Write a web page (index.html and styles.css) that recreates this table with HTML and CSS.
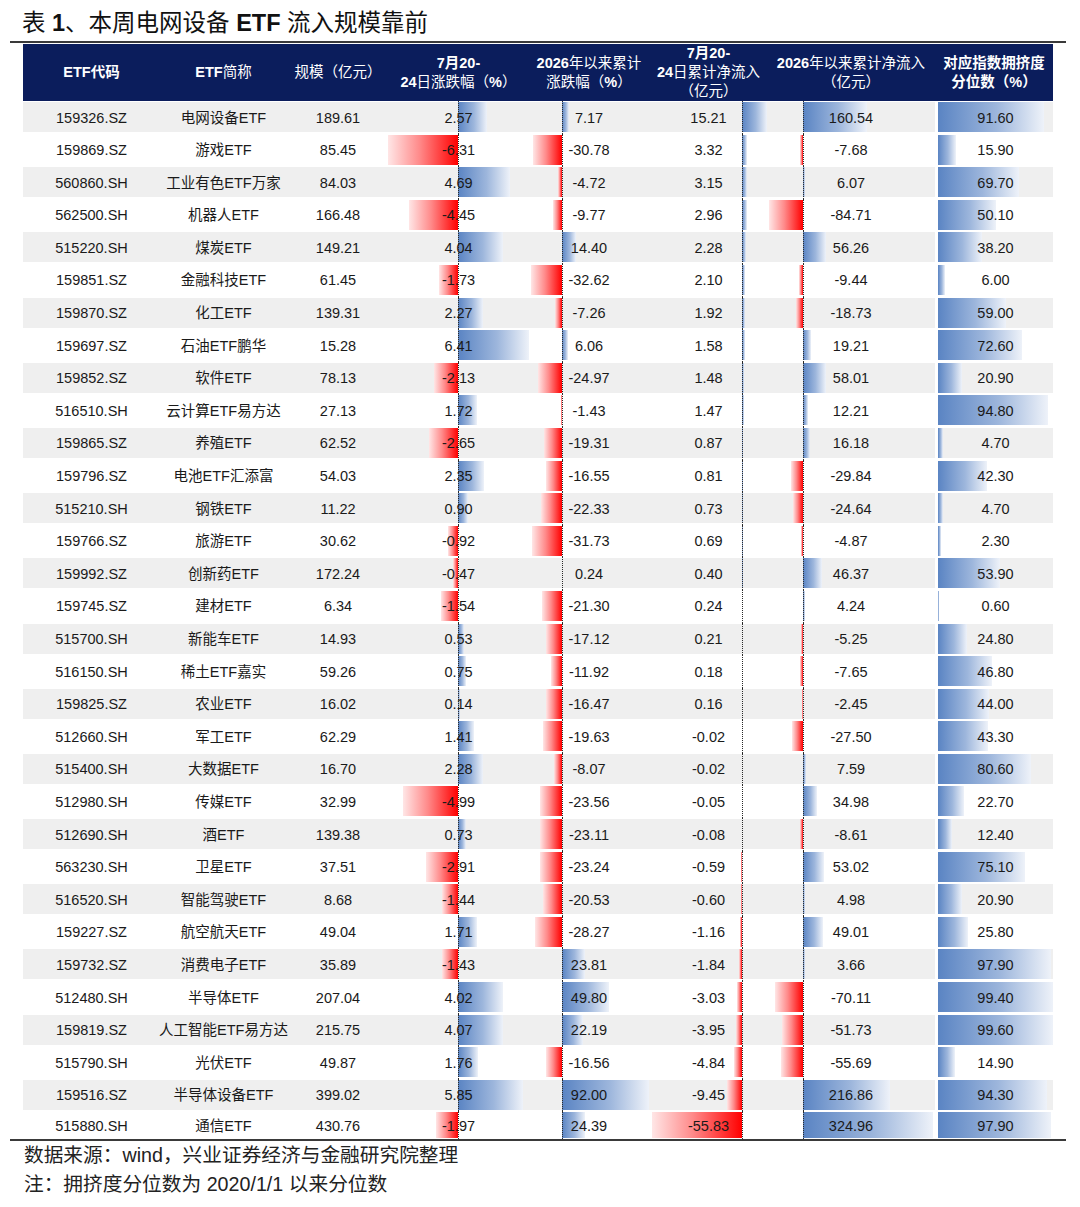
FILE: index.html
```html
<!DOCTYPE html>
<html lang="zh-CN">
<head>
<meta charset="utf-8">
<title>表 1、本周电网设备 ETF 流入规模靠前</title>
<link rel="stylesheet" href="styles.css">
</head>
<body>
<div class="page">
  <h1 class="title">表 <b>1</b>、本周电网设备 <b>ETF</b> 流入规模靠前</h1>
  <div class="rule"></div>
  <div class="table">
    <div class="head">
      <div class="h"><b>ETF代码</b></div>
      <div class="h"><span><b>ETF</b>简称</span></div>
      <div class="h">规模（亿元）</div>
      <div class="h"><span><b>7月20-</b><br><b>24</b>日涨跌幅（<b>%</b>）</span></div>
      <div class="h"><span><b>2026</b>年以来累计<br>涨跌幅（<b>%</b>）</span></div>
      <div class="h"><span><b>7月20-</b><br><b>24</b>日累计净流入<br>（亿元）</span></div>
      <div class="h"><span><b>2026</b>年以来累计净流入<br>（亿元）</span></div>
      <div class="h"><b>对应指数拥挤度<br>分位数（%）</b></div>
    </div>

    <div class="row g"><div class="c"><span>159326.SZ</span></div><div class="c"><span>电网设备ETF</span></div><div class="c"><span>189.61</span></div><div class="c c4"><i class="bp" style="width:28.5px"></i><span>2.57</span></div><div class="c c5"><i class="bp" style="width:6.8px"></i><span>7.17</span></div><div class="c c6"><i class="bp" style="width:24.6px"></i><span>15.21</span></div><div class="c c7"><i class="bp" style="width:64.2px"></i><span>160.54</span></div><div class="c c8"><i class="bp" style="width:105.8px"></i><span>91.60</span></div></div>
    <div class="row"><div class="c"><span>159869.SZ</span></div><div class="c"><span>游戏ETF</span></div><div class="c"><span>85.45</span></div><div class="c c4"><i class="bn" style="width:70px"></i><span>-6.31</span></div><div class="c c5"><i class="bn" style="width:29.2px"></i><span>-30.78</span></div><div class="c c6"><i class="bp" style="width:5.4px"></i><span>3.32</span></div><div class="c c7"><i class="bn" style="width:3.1px"></i><span>-7.68</span></div><div class="c c8"><i class="bp" style="width:18.4px"></i><span>15.90</span></div></div>
    <div class="row g"><div class="c"><span>560860.SH</span></div><div class="c"><span>工业有色ETF万家</span></div><div class="c"><span>84.03</span></div><div class="c c4"><i class="bp" style="width:52.1px"></i><span>4.69</span></div><div class="c c5"><i class="bn" style="width:4.5px"></i><span>-4.72</span></div><div class="c c6"><i class="bp" style="width:5.1px"></i><span>3.15</span></div><div class="c c7"><i class="bp" style="width:2.4px"></i><span>6.07</span></div><div class="c c8"><i class="bp" style="width:80.5px"></i><span>69.70</span></div></div>
    <div class="row"><div class="c"><span>562500.SH</span></div><div class="c"><span>机器人ETF</span></div><div class="c"><span>166.48</span></div><div class="c c4"><i class="bn" style="width:49.4px"></i><span>-4.45</span></div><div class="c c5"><i class="bn" style="width:9.3px"></i><span>-9.77</span></div><div class="c c6"><i class="bp" style="width:4.8px"></i><span>2.96</span></div><div class="c c7"><i class="bn" style="width:33.9px"></i><span>-84.71</span></div><div class="c c8"><i class="bp" style="width:57.9px"></i><span>50.10</span></div></div>
    <div class="row g"><div class="c"><span>515220.SH</span></div><div class="c"><span>煤炭ETF</span></div><div class="c"><span>149.21</span></div><div class="c c4"><i class="bp" style="width:44.8px"></i><span>4.04</span></div><div class="c c5"><i class="bp" style="width:13.7px"></i><span>14.40</span></div><div class="c c6"><i class="bp" style="width:3.7px"></i><span>2.28</span></div><div class="c c7"><i class="bp" style="width:22.5px"></i><span>56.26</span></div><div class="c c8"><i class="bp" style="width:44.1px"></i><span>38.20</span></div></div>
    <div class="row"><div class="c"><span>159851.SZ</span></div><div class="c"><span>金融科技ETF</span></div><div class="c"><span>61.45</span></div><div class="c c4"><i class="bn" style="width:19.2px"></i><span>-1.73</span></div><div class="c c5"><i class="bn" style="width:31px"></i><span>-32.62</span></div><div class="c c6"><i class="bp" style="width:3.4px"></i><span>2.10</span></div><div class="c c7"><i class="bn" style="width:3.8px"></i><span>-9.44</span></div><div class="c c8"><i class="bp" style="width:6.9px"></i><span>6.00</span></div></div>
    <div class="row g"><div class="c"><span>159870.SZ</span></div><div class="c"><span>化工ETF</span></div><div class="c"><span>139.31</span></div><div class="c c4"><i class="bp" style="width:25.2px"></i><span>2.27</span></div><div class="c c5"><i class="bn" style="width:6.9px"></i><span>-7.26</span></div><div class="c c6"><i class="bp" style="width:3.1px"></i><span>1.92</span></div><div class="c c7"><i class="bn" style="width:7.5px"></i><span>-18.73</span></div><div class="c c8"><i class="bp" style="width:68.1px"></i><span>59.00</span></div></div>
    <div class="row"><div class="c"><span>159697.SZ</span></div><div class="c"><span>石油ETF鹏华</span></div><div class="c"><span>15.28</span></div><div class="c c4"><i class="bp" style="width:71.2px"></i><span>6.41</span></div><div class="c c5"><i class="bp" style="width:5.8px"></i><span>6.06</span></div><div class="c c6"><i class="bp" style="width:2.6px"></i><span>1.58</span></div><div class="c c7"><i class="bp" style="width:7.7px"></i><span>19.21</span></div><div class="c c8"><i class="bp" style="width:83.9px"></i><span>72.60</span></div></div>
    <div class="row g"><div class="c"><span>159852.SZ</span></div><div class="c"><span>软件ETF</span></div><div class="c"><span>78.13</span></div><div class="c c4"><i class="bn" style="width:23.6px"></i><span>-2.13</span></div><div class="c c5"><i class="bn" style="width:23.7px"></i><span>-24.97</span></div><div class="c c6"><i class="bp" style="width:2.4px"></i><span>1.48</span></div><div class="c c7"><i class="bp" style="width:23.2px"></i><span>58.01</span></div><div class="c c8"><i class="bp" style="width:24.1px"></i><span>20.90</span></div></div>
    <div class="row"><div class="c"><span>516510.SH</span></div><div class="c"><span>云计算ETF易方达</span></div><div class="c"><span>27.13</span></div><div class="c c4"><i class="bp" style="width:19.1px"></i><span>1.72</span></div><div class="c c5"><i class="bn" style="width:1.4px"></i><span>-1.43</span></div><div class="c c6"><i class="bp" style="width:2.4px"></i><span>1.47</span></div><div class="c c7"><i class="bp" style="width:4.9px"></i><span>12.21</span></div><div class="c c8"><i class="bp" style="width:109.5px"></i><span>94.80</span></div></div>
    <div class="row g"><div class="c"><span>159865.SZ</span></div><div class="c"><span>养殖ETF</span></div><div class="c"><span>62.52</span></div><div class="c c4"><i class="bn" style="width:29.4px"></i><span>-2.65</span></div><div class="c c5"><i class="bn" style="width:18.3px"></i><span>-19.31</span></div><div class="c c6"><i class="bp" style="width:1.4px"></i><span>0.87</span></div><div class="c c7"><i class="bp" style="width:6.5px"></i><span>16.18</span></div><div class="c c8"><i class="bp" style="width:5.4px"></i><span>4.70</span></div></div>
    <div class="row"><div class="c"><span>159796.SZ</span></div><div class="c"><span>电池ETF汇添富</span></div><div class="c"><span>54.03</span></div><div class="c c4"><i class="bp" style="width:26.1px"></i><span>2.35</span></div><div class="c c5"><i class="bn" style="width:15.7px"></i><span>-16.55</span></div><div class="c c6"><i class="bp" style="width:1.3px"></i><span>0.81</span></div><div class="c c7"><i class="bn" style="width:11.9px"></i><span>-29.84</span></div><div class="c c8"><i class="bp" style="width:48.9px"></i><span>42.30</span></div></div>
    <div class="row g"><div class="c"><span>515210.SH</span></div><div class="c"><span>钢铁ETF</span></div><div class="c"><span>11.22</span></div><div class="c c4"><i class="bp" style="width:10px"></i><span>0.90</span></div><div class="c c5"><i class="bn" style="width:21.2px"></i><span>-22.33</span></div><div class="c c6"><i class="bp" style="width:1.2px"></i><span>0.73</span></div><div class="c c7"><i class="bn" style="width:9.9px"></i><span>-24.64</span></div><div class="c c8"><i class="bp" style="width:5.4px"></i><span>4.70</span></div></div>
    <div class="row"><div class="c"><span>159766.SZ</span></div><div class="c"><span>旅游ETF</span></div><div class="c"><span>30.62</span></div><div class="c c4"><i class="bn" style="width:10.2px"></i><span>-0.92</span></div><div class="c c5"><i class="bn" style="width:30.1px"></i><span>-31.73</span></div><div class="c c6"><i class="bp" style="width:1.1px"></i><span>0.69</span></div><div class="c c7"><i class="bn" style="width:1.9px"></i><span>-4.87</span></div><div class="c c8"><i class="bp" style="width:2.7px"></i><span>2.30</span></div></div>
    <div class="row g"><div class="c"><span>159992.SZ</span></div><div class="c"><span>创新药ETF</span></div><div class="c"><span>172.24</span></div><div class="c c4"><i class="bn" style="width:5.2px"></i><span>-0.47</span></div><div class="c c5"><i class="bp" style="width:0.3px"></i><span>0.24</span></div><div class="c c6"><i class="bp" style="width:0.6px"></i><span>0.40</span></div><div class="c c7"><i class="bp" style="width:18.5px"></i><span>46.37</span></div><div class="c c8"><i class="bp" style="width:62.3px"></i><span>53.90</span></div></div>
    <div class="row"><div class="c"><span>159745.SZ</span></div><div class="c"><span>建材ETF</span></div><div class="c"><span>6.34</span></div><div class="c c4"><i class="bn" style="width:17.1px"></i><span>-1.54</span></div><div class="c c5"><i class="bn" style="width:20.2px"></i><span>-21.30</span></div><div class="c c6"><i class="bp" style="width:0.4px"></i><span>0.24</span></div><div class="c c7"><i class="bp" style="width:1.7px"></i><span>4.24</span></div><div class="c c8"><i class="bp" style="width:0.7px"></i><span>0.60</span></div></div>
    <div class="row g"><div class="c"><span>515700.SH</span></div><div class="c"><span>新能车ETF</span></div><div class="c"><span>14.93</span></div><div class="c c4"><i class="bp" style="width:5.9px"></i><span>0.53</span></div><div class="c c5"><i class="bn" style="width:16.3px"></i><span>-17.12</span></div><div class="c c6"><i class="bp" style="width:0.3px"></i><span>0.21</span></div><div class="c c7"><i class="bn" style="width:2.1px"></i><span>-5.25</span></div><div class="c c8"><i class="bp" style="width:28.6px"></i><span>24.80</span></div></div>
    <div class="row"><div class="c"><span>516150.SH</span></div><div class="c"><span>稀土ETF嘉实</span></div><div class="c"><span>59.26</span></div><div class="c c4"><i class="bp" style="width:8.3px"></i><span>0.75</span></div><div class="c c5"><i class="bn" style="width:11.3px"></i><span>-11.92</span></div><div class="c c6"><i class="bp" style="width:0.3px"></i><span>0.18</span></div><div class="c c7"><i class="bn" style="width:3.1px"></i><span>-7.65</span></div><div class="c c8"><i class="bp" style="width:54.1px"></i><span>46.80</span></div></div>
    <div class="row g"><div class="c"><span>159825.SZ</span></div><div class="c"><span>农业ETF</span></div><div class="c"><span>16.02</span></div><div class="c c4"><i class="bp" style="width:1.6px"></i><span>0.14</span></div><div class="c c5"><i class="bn" style="width:15.6px"></i><span>-16.47</span></div><div class="c c6"><i class="bp" style="width:0.3px"></i><span>0.16</span></div><div class="c c7"><i class="bn" style="width:1px"></i><span>-2.45</span></div><div class="c c8"><i class="bp" style="width:50.8px"></i><span>44.00</span></div></div>
    <div class="row"><div class="c"><span>512660.SH</span></div><div class="c"><span>军工ETF</span></div><div class="c"><span>62.29</span></div><div class="c c4"><i class="bp" style="width:15.7px"></i><span>1.41</span></div><div class="c c5"><i class="bn" style="width:18.6px"></i><span>-19.63</span></div><div class="c c6"><i class="bn" style="width:0.1px"></i><span>-0.02</span></div><div class="c c7"><i class="bn" style="width:11px"></i><span>-27.50</span></div><div class="c c8"><i class="bp" style="width:50px"></i><span>43.30</span></div></div>
    <div class="row g"><div class="c"><span>515400.SH</span></div><div class="c"><span>大数据ETF</span></div><div class="c"><span>16.70</span></div><div class="c c4"><i class="bp" style="width:25.3px"></i><span>2.28</span></div><div class="c c5"><i class="bn" style="width:7.7px"></i><span>-8.07</span></div><div class="c c6"><i class="bn" style="width:0.1px"></i><span>-0.02</span></div><div class="c c7"><i class="bp" style="width:3px"></i><span>7.59</span></div><div class="c c8"><i class="bp" style="width:93.1px"></i><span>80.60</span></div></div>
    <div class="row"><div class="c"><span>512980.SH</span></div><div class="c"><span>传媒ETF</span></div><div class="c"><span>32.99</span></div><div class="c c4"><i class="bn" style="width:55.4px"></i><span>-4.99</span></div><div class="c c5"><i class="bn" style="width:22.4px"></i><span>-23.56</span></div><div class="c c6"><i class="bn" style="width:0.1px"></i><span>-0.05</span></div><div class="c c7"><i class="bp" style="width:14px"></i><span>34.98</span></div><div class="c c8"><i class="bp" style="width:26.2px"></i><span>22.70</span></div></div>
    <div class="row g"><div class="c"><span>512690.SH</span></div><div class="c"><span>酒ETF</span></div><div class="c"><span>139.38</span></div><div class="c c4"><i class="bp" style="width:8.1px"></i><span>0.73</span></div><div class="c c5"><i class="bn" style="width:22px"></i><span>-23.11</span></div><div class="c c6"><i class="bn" style="width:0.1px"></i><span>-0.08</span></div><div class="c c7"><i class="bn" style="width:3.4px"></i><span>-8.61</span></div><div class="c c8"><i class="bp" style="width:14.3px"></i><span>12.40</span></div></div>
    <div class="row"><div class="c"><span>563230.SH</span></div><div class="c"><span>卫星ETF</span></div><div class="c"><span>37.51</span></div><div class="c c4"><i class="bn" style="width:32.3px"></i><span>-2.91</span></div><div class="c c5"><i class="bn" style="width:22.1px"></i><span>-23.24</span></div><div class="c c6"><i class="bn" style="width:1px"></i><span>-0.59</span></div><div class="c c7"><i class="bp" style="width:21.2px"></i><span>53.02</span></div><div class="c c8"><i class="bp" style="width:86.7px"></i><span>75.10</span></div></div>
    <div class="row g"><div class="c"><span>516520.SH</span></div><div class="c"><span>智能驾驶ETF</span></div><div class="c"><span>8.68</span></div><div class="c c4"><i class="bn" style="width:16px"></i><span>-1.44</span></div><div class="c c5"><i class="bn" style="width:19.5px"></i><span>-20.53</span></div><div class="c c6"><i class="bn" style="width:1px"></i><span>-0.60</span></div><div class="c c7"><i class="bp" style="width:2px"></i><span>4.98</span></div><div class="c c8"><i class="bp" style="width:24.1px"></i><span>20.90</span></div></div>
    <div class="row"><div class="c"><span>159227.SZ</span></div><div class="c"><span>航空航天ETF</span></div><div class="c"><span>49.04</span></div><div class="c c4"><i class="bp" style="width:19px"></i><span>1.71</span></div><div class="c c5"><i class="bn" style="width:26.9px"></i><span>-28.27</span></div><div class="c c6"><i class="bn" style="width:1.9px"></i><span>-1.16</span></div><div class="c c7"><i class="bp" style="width:19.6px"></i><span>49.01</span></div><div class="c c8"><i class="bp" style="width:29.8px"></i><span>25.80</span></div></div>
    <div class="row g"><div class="c"><span>159732.SZ</span></div><div class="c"><span>消费电子ETF</span></div><div class="c"><span>35.89</span></div><div class="c c4"><i class="bn" style="width:15.9px"></i><span>-1.43</span></div><div class="c c5"><i class="bp" style="width:22.6px"></i><span>23.81</span></div><div class="c c6"><i class="bn" style="width:3px"></i><span>-1.84</span></div><div class="c c7"><i class="bp" style="width:1.5px"></i><span>3.66</span></div><div class="c c8"><i class="bp" style="width:113.1px"></i><span>97.90</span></div></div>
    <div class="row"><div class="c"><span>512480.SH</span></div><div class="c"><span>半导体ETF</span></div><div class="c"><span>207.04</span></div><div class="c c4"><i class="bp" style="width:44.6px"></i><span>4.02</span></div><div class="c c5"><i class="bp" style="width:47.3px"></i><span>49.80</span></div><div class="c c6"><i class="bn" style="width:4.9px"></i><span>-3.03</span></div><div class="c c7"><i class="bn" style="width:28px"></i><span>-70.11</span></div><div class="c c8"><i class="bp" style="width:114.8px"></i><span>99.40</span></div></div>
    <div class="row g"><div class="c"><span>159819.SZ</span></div><div class="c"><span>人工智能ETF易方达</span></div><div class="c"><span>215.75</span></div><div class="c c4"><i class="bp" style="width:45.2px"></i><span>4.07</span></div><div class="c c5"><i class="bp" style="width:21.1px"></i><span>22.19</span></div><div class="c c6"><i class="bn" style="width:6.4px"></i><span>-3.95</span></div><div class="c c7"><i class="bn" style="width:20.7px"></i><span>-51.73</span></div><div class="c c8"><i class="bp" style="width:115px"></i><span>99.60</span></div></div>
    <div class="row"><div class="c"><span>515790.SH</span></div><div class="c"><span>光伏ETF</span></div><div class="c"><span>49.87</span></div><div class="c c4"><i class="bp" style="width:19.5px"></i><span>1.76</span></div><div class="c c5"><i class="bn" style="width:15.7px"></i><span>-16.56</span></div><div class="c c6"><i class="bn" style="width:7.8px"></i><span>-4.84</span></div><div class="c c7"><i class="bn" style="width:22.3px"></i><span>-55.69</span></div><div class="c c8"><i class="bp" style="width:17.2px"></i><span>14.90</span></div></div>
    <div class="row g"><div class="c"><span>159516.SZ</span></div><div class="c"><span>半导体设备ETF</span></div><div class="c"><span>399.02</span></div><div class="c c4"><i class="bp" style="width:64.9px"></i><span>5.85</span></div><div class="c c5"><i class="bp" style="width:87.4px"></i><span>92.00</span></div><div class="c c6"><i class="bn" style="width:15.3px"></i><span>-9.45</span></div><div class="c c7"><i class="bp" style="width:86.7px"></i><span>216.86</span></div><div class="c c8"><i class="bp" style="width:108.9px"></i><span>94.30</span></div></div>
    <div class="row last"><div class="c"><span>515880.SH</span></div><div class="c"><span>通信ETF</span></div><div class="c"><span>430.76</span></div><div class="c c4"><i class="bn" style="width:21.9px"></i><span>-1.97</span></div><div class="c c5"><i class="bp" style="width:23.2px"></i><span>24.39</span></div><div class="c c6"><i class="bn" style="width:90.4px"></i><span>-55.83</span></div><div class="c c7"><i class="bp" style="width:130px"></i><span>324.96</span></div><div class="c c8"><i class="bp" style="width:113.1px"></i><span>97.90</span></div></div>
  </div>
  <div class="rule rule-bottom"></div>
  <div class="notes">
    <p>数据来源：wind，兴业证券经济与金融研究院整理</p>
    <p>注：拥挤度分位数为 2020/1/1 以来分位数</p>
  </div>
</div>
</body>
</html>
```

FILE: styles.css
```css
html, body {
  margin: 0;
  padding: 0;
  background: #ffffff;
}

body {
  font-family: "Liberation Sans", "Noto Sans CJK SC", sans-serif;
  color: #1a1a1a;
}

.page {
  width: 1080px;
  padding: 8px 0 0 10px;
  box-sizing: border-box;
}

.title {
  margin: 0 0 0 12px;
  font-size: 23.5px;
  line-height: 30px;
  height: 30px;
  font-weight: 400;
  color: #111;
  white-space: nowrap;
}

.title b {
  font-weight: 700;
}

.rule {
  width: 1056px;
  height: 2px;
  margin-top: 3px;
  background: #3a3a3a;
}

.rule-bottom {
  margin-top: 0;
}

.table {
  margin: 1px 0 0 13px;
  width: 1030px;
}

.head,
.row {
  display: grid;
  grid-template-columns: 137px 127px 102px 139px 122px 117px 168px 118px;
}

.head {
  height: 57px;
  background: #0b1d5c;
  color: #ffffff;
}

.h {
  display: flex;
  align-items: center;
  justify-content: center;
  text-align: center;
  font-size: 14.5px;
  line-height: 19px;
  font-weight: 400;
  white-space: nowrap;
}

.h b {
  font-weight: 700;
}

.row {
  height: 32.6px;
  padding: 1px 0 1.6px;
  box-sizing: border-box;
  background: #ffffff;
}

.row.last {
  height: 27.4px;
  padding: 1px 0 0.4px;
}

.c {
  position: relative;
  display: flex;
  align-items: center;
  justify-content: center;
  font-size: 14.5px;
  line-height: 17px;
  white-space: nowrap;
}

.row.g .c {
  background: #efefef;
}

.c span {
  position: relative;
  top: 1px;
  z-index: 2;
}

.c8 {
  border-left: 3px solid #ffffff;
}

.bp,
.bn {
  position: absolute;
  top: 0;
  bottom: 0;
  z-index: 1;
}

.bp {
  background: linear-gradient(to right, #5a84c3 0%, #9db6dc 55%, #eef2f9 100%);
}

.bn {
  background: linear-gradient(to left, #ff0000 0%, #ff8a8a 55%, #ffe6e6 100%);
}

/* axis lines (dotted) */
.c4::after,
.c5::after,
.c6::after,
.c7::after {
  content: "";
  position: absolute;
  top: -1px;
  bottom: -1.6px;
  width: 0;
  border-left: 1px dotted #2a2a2a;
  z-index: 3;
}

.row.last .c4::after,
.row.last .c5::after,
.row.last .c6::after,
.row.last .c7::after {
  bottom: -0.4px;
}

.c4::after { left: 69px; }
.c4 .bp { left: 69px; }
.c4 .bn { right: 70px; }

.c5::after { left: 34px; }
.c5 .bp { left: 34px; }
.c5 .bn { right: 88px; }

.c6::after { left: 92px; }
.c6 .bp { left: 92px; }
.c6 .bn { right: 25px; }

.c7::after { left: 36px; }
.c7 .bp { left: 36px; }
.c7 .bn { right: 132px; }

.c8 .bp { left: 0; }

.notes {
  margin-left: 14px;
  font-size: 19.7px;
  line-height: 29px;
  color: #222;
}

.notes p {
  margin: 0;
  white-space: nowrap;
}
```
